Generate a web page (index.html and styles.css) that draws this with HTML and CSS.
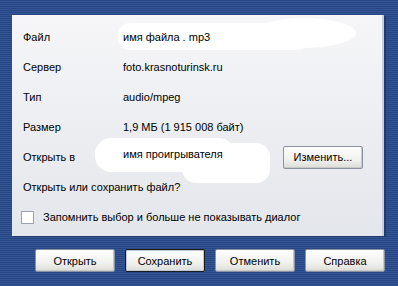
FILE: index.html
```html
<!DOCTYPE html>
<html lang="ru">
  <head>
    <meta charset="UTF-8" />
    <title>Открытие файла</title>
    <link rel="stylesheet" href="styles.css">
  </head>
  <body>
    <div class="panel">
      <div class="blob blob1"></div>
      <div class="blob blob1b"></div>
      <div class="blob blob2"></div>
      <div class="blob blob2b"></div>

      <div class="row">
        <span class="label">Файл</span>
        <span class="value">имя файла . mp3</span>
      </div>
      <div class="row">
        <span class="label">Сервер</span>
        <span class="value">foto.krasnoturinsk.ru</span>
      </div>
      <div class="row">
        <span class="label">Тип</span>
        <span class="value">audio/mpeg</span>
      </div>
      <div class="row">
        <span class="label">Размер</span>
        <span class="value">1,9 МБ (1 915 008 байт)</span>
      </div>
      <div class="row">
        <span class="label">Открыть в</span>
        <span class="value player">имя проигрывателя</span>
        <button class="btn change">Изменить...</button>
      </div>
      <div class="row">
        <span class="label wide">Открыть или сохранить файл?</span>
      </div>
      <div class="row check-row">
        <span class="checkbox"></span>
        <span>Запомнить выбор и больше не показывать диалог</span>
      </div>
    </div>

    <div class="buttons">
      <button class="btn">Открыть</button>
      <button class="btn default">Сохранить</button>
      <button class="btn">Отменить</button>
      <button class="btn">Справка</button>
    </div>
  </body>
</html>
```

FILE: styles.css
```css
body {
  margin: 0;
  height: 286px;
  font-family: "Liberation Sans", Arial, sans-serif;
  font-size: 11px;
  color: #000;
  background: repeating-linear-gradient(#284783 0 1px, #325394 1px 2px);
  overflow: hidden;
}

.panel {
  position: relative;
  margin: 15px 0 0 12px;
  width: 372px;
  height: 221px;
  box-sizing: border-box;
  padding: 7px 0 0 11px;
  background: linear-gradient(#f6f6f8, #e3e6eb);
  box-shadow: inset -2px 0 0 #c9ced8, 2px 1px 0 #1f3b70;
}

.blob {
  position: absolute;
  background: #fff;
  border-radius: 12px;
}

.blob1 {
  left: 106px;
  top: 8px;
  width: 190px;
  height: 27px;
}

.blob1b {
  left: 240px;
  top: 3px;
  width: 104px;
  height: 30px;
  border-radius: 50%;
}

.blob2 {
  left: 83px;
  top: 123px;
  width: 140px;
  height: 34px;
  border-radius: 16px;
}

.blob2b {
  left: 170px;
  top: 128px;
  width: 88px;
  height: 40px;
  border-radius: 14px;
}

.row {
  position: relative;
  display: flex;
  align-items: center;
  height: 30px;
}

.label {
  width: 100px;
  flex: none;
}

.label.wide {
  width: auto;
}

.player {
  width: 160px;
  margin-top: -6px;
}

.check-row {
  margin-left: -2px;
  gap: 9px;
}

.checkbox {
  width: 11px;
  height: 11px;
  border: 1px solid #9aa3b2;
  background: #fff;
}

.btn {
  width: 80px;
  height: 23px;
  padding: 0;
  font-family: "Liberation Sans", Arial, sans-serif;
  font-size: 11px;
  color: #000;
  border: 1px solid #8b93a3;
  border-radius: 2px;
  background: linear-gradient(#fefefe, #f1f1ef 60%, #dcdcd8);
  box-shadow: inset -1px -1px 0 #c8c8c4;
}

.btn.default {
  border-color: #1c1c1c;
  box-shadow: inset 0 0 0 1px #bfc6d6;
}

.buttons {
  display: flex;
  gap: 10px;
  margin: 13px 0 0 35px;
}
```
